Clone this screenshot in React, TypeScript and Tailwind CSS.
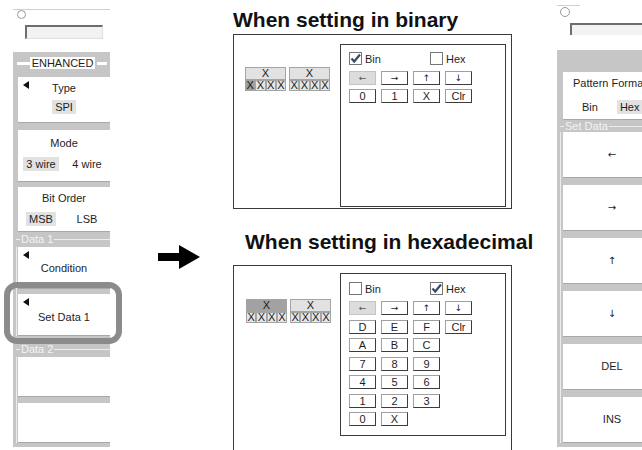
import React from "react";

const ARROWS = ["←", "→", "↑", "↓"];

const Tri = () => (
  <svg width="6" height="8" viewBox="0 0 6 8" className="absolute left-[5px] top-[4px]">
    <path d="M6 0 L0 4 L6 8 Z" fill="#111" />
  </svg>
);

function PanelButton({
  children,
  className = "",
  tri = false,
}: {
  children?: React.ReactNode;
  className?: string;
  tri?: boolean;
}) {
  return (
    <div className={`relative bg-white border-b border-[#a8a8a8] text-[11px] leading-[14px] text-[#1e1e1e] ${className}`}>
      {tri && <Tri />}
      {children}
    </div>
  );
}

function GroupLabel({ text, className = "" }: { text: string; className?: string }) {
  return (
    <div className={`flex items-center ${className}`}>
      <div className="w-[4px] h-px bg-[#ececec]" />
      <span className="text-[11px] leading-[13px] text-[#f4f4f4] px-[1px]">{text}</span>
      <div className="flex-1 h-px bg-[#ececec]" />
    </div>
  );
}

function Choice({ items, sel }: { items: string[]; sel: number }) {
  return (
    <div className="grid grid-cols-2">
      {items.map((t, i) => (
        <div key={t} className="flex justify-center">
          <span className={`px-[3px] ${i === sel ? "bg-[#e2e2e2]" : ""}`}>{t}</span>
        </div>
      ))}
    </div>
  );
}

function LeftPanel() {
  return (
    <div className="relative w-[130px] shrink-0 h-[450px]">
      <div className="pt-[9px] pl-[13px]">
        <div className="w-[97px] h-px bg-[#cfcfcf]" />
        <div className="ml-[4px] w-[9px] h-[9px] rounded-full border border-[#9a9a9a] bg-white" />
        <div className="ml-[12px] mt-[6px] w-[78px] h-[14px] bg-[#f2f2f2] border-t-2 border-l-2 border-[#6e6e6e] border-r border-b border-r-[#dedede] border-b-[#dedede]" />
      </div>
      <div className="mt-[13px] ml-[13px] w-[97px] h-[395px] bg-[#c6c6c6] flex flex-col overflow-hidden">
        <div className="h-[25px] pt-[5px] pl-[4px] pr-[3px]">
          <div className="flex items-center h-[12px]">
            <div className="w-[13px] h-[3px] bg-white" />
            <div className="w-[65px] bg-white text-center text-[11px] leading-[12px] text-[#1e1e1e]">ENHANCED</div>
            <div className="w-[2px]" />
            <div className="flex-1 h-[3px] bg-white" />
          </div>
        </div>
        <div className="pl-[5px]">
          <PanelButton tri className="h-[46px] pt-[4px] flex flex-col items-center">
            <span>Type</span>
            <span className="mt-[5px] px-[3px] bg-[#e2e2e2]">SPI</span>
          </PanelButton>
          <div className="h-[7px]" />
          <PanelButton className="h-[52px] pt-[6px]">
            <div className="text-center">Mode</div>
            <div className="mt-[7px]">
              <Choice items={["3 wire", "4 wire"]} sel={0} />
            </div>
          </PanelButton>
          <div className="h-[5px]" />
          <PanelButton className="h-[45px] pt-[4px]">
            <div className="text-center">Bit Order</div>
            <div className="mt-[7px]">
              <Choice items={["MSB", "LSB"]} sel={0} />
            </div>
          </PanelButton>
        </div>
        <div className="ml-[3px] flex flex-col">
          <GroupLabel text="Data 1" className="h-[15px]" />
          <div className="border-l border-[#ececec] pl-[1px]">
            <PanelButton tri className="h-[42px] pt-[14px] text-center">Condition</PanelButton>
            <div className="h-[5px]" />
            <PanelButton tri className="h-[42px] pt-[16px] text-center">Set Data 1</PanelButton>
          </div>
          <GroupLabel text="Data 2" className="h-[21px] pt-[5px]" />
          <div className="border-l border-[#ececec] pl-[1px]">
            <PanelButton className="h-[40px]" />
            <div className="h-[6px]" />
            <PanelButton className="h-[40px]" />
          </div>
        </div>
      </div>
      <div className="absolute left-[4px] top-[282px] w-[118px] h-[62px] border-[6px] border-[#8b8b8b] rounded-[13px]" />
    </div>
  );
}

function Bits({ hex }: { hex: boolean }) {
  return (
    <div className="flex gap-[3px] text-[11px] text-[#1a1a1a]">
      {[0, 1].map((g) => (
        <div key={g} className="w-[41px] flex flex-col">
          <div
            className={`h-[13px] border border-[#a4a4a4] text-center leading-[11px] ${
              hex && g === 0 ? "bg-[#a2a2a2]" : "bg-[#e2e2e2]"
            }`}
          >
            X
          </div>
          <div className="flex">
            {[0, 1, 2, 3].map((i) => (
              <div
                key={i}
                className={`flex-1 h-[11px] border border-[#a4a4a4] text-center leading-[9px] ${
                  !hex && g === 0 && i === 0 ? "bg-[#9e9e9e]" : "bg-[#e6e6e6]"
                }`}
              >
                X
              </div>
            ))}
          </div>
        </div>
      ))}
    </div>
  );
}

function Check({ on }: { on: boolean }) {
  return (
    <div className="w-[13px] h-[13px] border border-[#767676] bg-white shrink-0">
      {on && (
        <svg width="11" height="11" viewBox="0 0 11 11">
          <path d="M1.5 5.5 L4.2 8.5 L10 1.5" fill="none" stroke="#3b4a6b" strokeWidth="2.2" />
        </svg>
      )}
    </div>
  );
}

function Key({ label, sel = false }: { label: string; sel?: boolean }) {
  const arrow = ARROWS.includes(label);
  return (
    <div
      className={`h-[14px] text-center text-[#1e1e1e] border ${
        arrow ? "font-['DejaVu_Sans',sans-serif] text-[9px] leading-[12px]" : "text-[11px] leading-[12px]"
      } ${
        sel
          ? "bg-[#dcdcdc] border-[#c4c4c4] text-[#555]"
          : "bg-white border-[#a0a0a0] border-r-[#3c3c3c] border-b-[#3c3c3c]"
      }`}
    >
      {label}
    </div>
  );
}

function InnerBox({ hex }: { hex: boolean }) {
  const rows = hex
    ? [
        ["←", "→", "↑", "↓"],
        ["D", "E", "F", "Clr"],
        ["A", "B", "C"],
        ["7", "8", "9"],
        ["4", "5", "6"],
        ["1", "2", "3"],
        ["0", "X"],
      ]
    : [
        ["←", "→", "↑", "↓"],
        ["0", "1", "X", "Clr"],
      ];
  return (
    <div className={`w-[166px] h-[163px] border border-[#3a3a3a] pl-[8px] ${hex ? "pt-[8px]" : "pt-[7px]"}`}>
      <div className="flex items-center h-[13px] text-[11px] text-[#1e1e1e]">
        <div className="w-[81px] flex items-center">
          <Check on={!hex} />
          <span className="ml-[3px]">Bin</span>
        </div>
        <Check on={hex} />
        <span className="ml-[3px]">Hex</span>
      </div>
      <div className={`mt-[6px] grid grid-cols-[27px_27px_27px_27px] gap-x-[5px] ${hex ? "gap-y-[4.5px]" : "gap-y-[4px]"}`}>
        {rows.map((r, ri) =>
          [0, 1, 2, 3].map((ci) =>
            r[ci] !== undefined ? (
              <Key key={`${ri}-${ci}`} label={r[ci]} sel={ri === 0 && ci === 0} />
            ) : (
              <div key={`${ri}-${ci}`} />
            )
          )
        )}
      </div>
    </div>
  );
}

function Middle() {
  return (
    <div className="w-[324px] shrink-0 flex flex-col font-['Liberation_Sans',Arial,sans-serif]">
      <div className="h-[35px] pt-[9px] text-[21px] leading-[21px] font-bold text-[#111]">When setting in binary</div>
      <div className="w-[279px] h-[180px] border border-[#3a3a3a] flex pt-[9px]">
        <div className="w-[106px] pl-[11px] pt-[23px]">
          <Bits hex={false} />
        </div>
        <InnerBox hex={false} />
      </div>
      <div className="h-[57px] pt-[22px] pl-[12px] text-[21px] leading-[21px] font-bold text-[#111]">
        When setting in hexadecimal
      </div>
      <div className="w-[279px] h-[190px] border-t border-l border-r border-[#3a3a3a] flex pt-[7px]">
        <div className="w-[106px] pl-[12px] pt-[26px]">
          <Bits hex={true} />
        </div>
        <InnerBox hex={true} />
      </div>
    </div>
  );
}

function RightPanel() {
  const keys = ["←", "→", "↑", "↓", "DEL", "INS"];
  return (
    <div className="w-[110px] shrink-0 h-[450px]">
      <div className="pt-[5px]">
        <div className="w-[23px] h-px bg-[#cfcfcf]" />
        <div className="ml-[3px] mt-px w-[10px] h-[10px] rounded-full border border-[#9a9a9a] bg-white" />
        <div className="ml-[13px] mt-[6px] w-[97px] h-[12px] bg-[#f2f2f2] border-t-2 border-l-2 border-[#6e6e6e]" />
      </div>
      <div className="mt-[15px] h-[397px] bg-[#c6c6c6] pl-[6px] pt-[22px] flex flex-col">
        <div className="w-[98px] h-[48px] bg-white border-b border-[#a8a8a8] pt-[4px] text-[11px] leading-[14px] text-[#1e1e1e]">
          <div className="pl-[10px] whitespace-nowrap">Pattern Format</div>
          <div className="mt-[10px] flex pl-[19px]">
            <span>Bin</span>
            <span className="ml-[19px] px-[3px] bg-[#e2e2e2]">Hex</span>
          </div>
        </div>
        <div className="-ml-[3px] flex flex-col">
          <div className="h-[12px] flex items-center">
            <div className="w-[4px] h-px bg-[#ececec]" />
            <span className="text-[11px] leading-[12px] text-[#f4f4f4] px-[1px]">Set Data</span>
            <div className="flex-1 h-px bg-[#ececec]" />
          </div>
          <div className="border-l border-[#ececec] pl-[2px] flex flex-col gap-[7px]">
            {keys.map((k) => (
              <div
                key={k}
                className={`w-[98px] h-[46px] bg-white border-b border-[#a8a8a8] flex items-center justify-center text-[#1e1e1e] ${
                  ARROWS.includes(k) ? "font-['DejaVu_Sans',sans-serif] text-[10px]" : "text-[11px]"
                }`}
              >
                {k}
              </div>
            ))}
          </div>
        </div>
      </div>
    </div>
  );
}

export default function App() {
  return (
    <div className="w-[642px] h-[450px] bg-white flex overflow-hidden font-['Liberation_Sans',Arial,sans-serif]">
      <LeftPanel />
      <div className="w-[103px] shrink-0 pl-[28px] pt-[245px]">
        <svg width="42" height="24" viewBox="0 0 42 24">
          <rect x="0" y="8" width="22" height="8" fill="#000" />
          <path d="M21 0 L42 12 L21 24 Z" fill="#000" />
        </svg>
      </div>
      <Middle />
      <RightPanel />
    </div>
  );
}
